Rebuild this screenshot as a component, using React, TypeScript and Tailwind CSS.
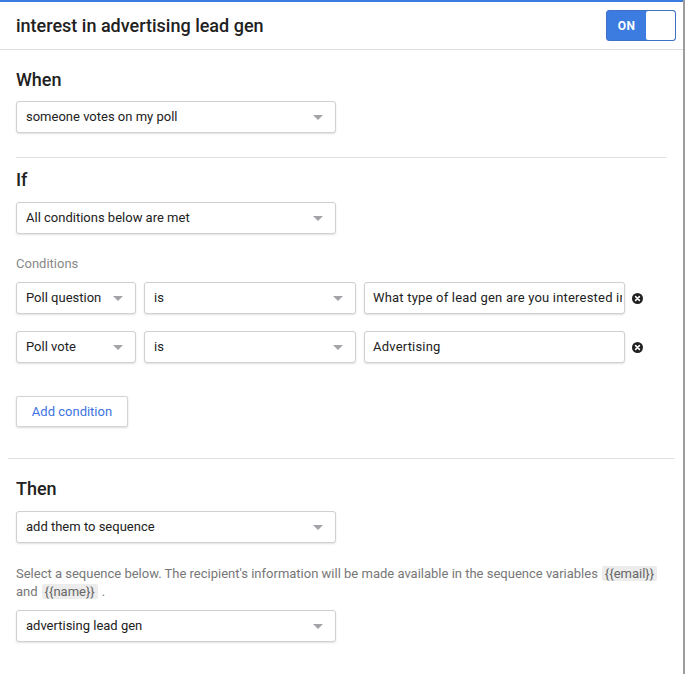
import React from 'react';

const Arrow = () => (
  <span className="ml-auto h-0 w-0 border-x-[5px] border-t-[5px] border-x-transparent border-t-[#a3a3a8]" />
);

const Select = ({ value, className = '' }: { value: string; className?: string }) => (
  <div
    className={`flex h-[32px] items-center rounded-[3px] border border-[#cfcfd4] bg-white pl-[9px] pr-[12px] text-[13px] text-[#222] shadow-[0_1px_2px_rgba(0,0,0,0.12)] ${className}`}
  >
    <span className="truncate">{value}</span>
    <Arrow />
  </div>
);

const Input = ({ value }: { value: string }) => (
  <div className="flex h-[32px] w-[261px] items-center rounded-[3px] border border-[#cfcfd4] bg-white pl-[8px] pr-[2px] text-[13px] tracking-[0.2px] text-[#222] shadow-[0_1px_2px_rgba(0,0,0,0.12)]">
    <span className="overflow-hidden whitespace-nowrap">{value}</span>
  </div>
);

const RemoveIcon = () => (
  <svg width="11" height="11" viewBox="0 0 11 11" className="ml-[-1px]">
    <circle cx="5.5" cy="5.5" r="5.5" fill="#222" />
    <path d="M3.6 3.6 L7.4 7.4 M7.4 3.6 L3.6 7.4" stroke="#fff" strokeWidth="1.5" strokeLinecap="round" />
  </svg>
);

const Chip = ({ children }: { children: React.ReactNode }) => (
  <span className="mx-[4px] rounded-[2px] bg-[#ececec] px-[3px] text-[#666]">{children}</span>
);

export default function App() {
  return (
    <div
      className="min-h-[674px] w-full border-r-2 border-[#9d9d9d] bg-white text-[#212121]"
      style={{ fontFamily: 'Roboto, "Liberation Sans", sans-serif' }}
    >
      <div className="h-[2px] w-full bg-[#3c7be0]" />
      {/* Header */}
      <div className="flex h-[48px] items-center border-b border-[#dedede] pl-4 pr-[7px]">
        <h1 className="text-[18px] font-medium">interest in advertising lead gen</h1>
        <div className="ml-auto flex h-[31px] w-[70px] overflow-hidden rounded-[3px] border border-[#3f72c4] bg-[#3c7be0]">
          <span className="flex w-[39px] items-center justify-center text-[12px] font-bold tracking-[0.5px] text-white">ON</span>
          <span className="flex-1 rounded-[2px] bg-white" />
        </div>
      </div>

      {/* When */}
      <div className="px-4 pt-[18px]">
        <h2 className="text-[18px] font-medium leading-[24px]">When</h2>
        <Select value="someone votes on my poll" className="mt-[9px] w-[320px]" />
        <div className="mt-[24px] h-px bg-[#e2e2e2]" />
      </div>

      {/* If */}
      <div className="px-4 pt-[10px]">
        <h2 className="text-[18px] font-medium leading-[24px]">If</h2>
        <Select value="All conditions below are met" className="mt-[10px] w-[320px]" />
        <p className="mt-[21px] text-[13px] leading-[18px] text-[#888]">Conditions</p>
        <div className="mt-[9px] flex items-center gap-[8px]">
          <Select value="Poll question" className="w-[120px]" />
          <Select value="is" className="w-[212px]" />
          <Input value="What type of lead gen are you interested in?" />
          <RemoveIcon />
        </div>
        <div className="mt-[17px] flex items-center gap-[8px]">
          <Select value="Poll vote" className="w-[120px]" />
          <Select value="is" className="w-[212px]" />
          <Input value="Advertising" />
          <RemoveIcon />
        </div>
        <button className="mt-[33px] h-[31px] w-[112px] rounded-[2px] border border-[#d3d3d8] bg-white text-[13px] text-[#3d73e0] shadow-[0_1px_2px_rgba(0,0,0,0.15)]">
          Add condition
        </button>
      </div>
      <div className="mx-2 mt-[31px] h-px bg-[#e2e2e2]" />

      {/* Then */}
      <div className="px-4 pt-[18px]">
        <h2 className="text-[18px] font-medium leading-[24px]">Then</h2>
        <Select value="add them to sequence" className="mt-[10px] w-[320px]" />
        <p className="mt-[22px] text-[13px] leading-[18px] text-[#777]">
          Select a sequence below. The recipient's information will be made available in the sequence variables
          <Chip>{'{{email}}'}</Chip>
          <br />
          and<Chip>{'{{name}}'}</Chip>.
        </p>
        <Select value="advertising lead gen" className="mt-[9px] w-[320px]" />
      </div>
    </div>
  );
}
